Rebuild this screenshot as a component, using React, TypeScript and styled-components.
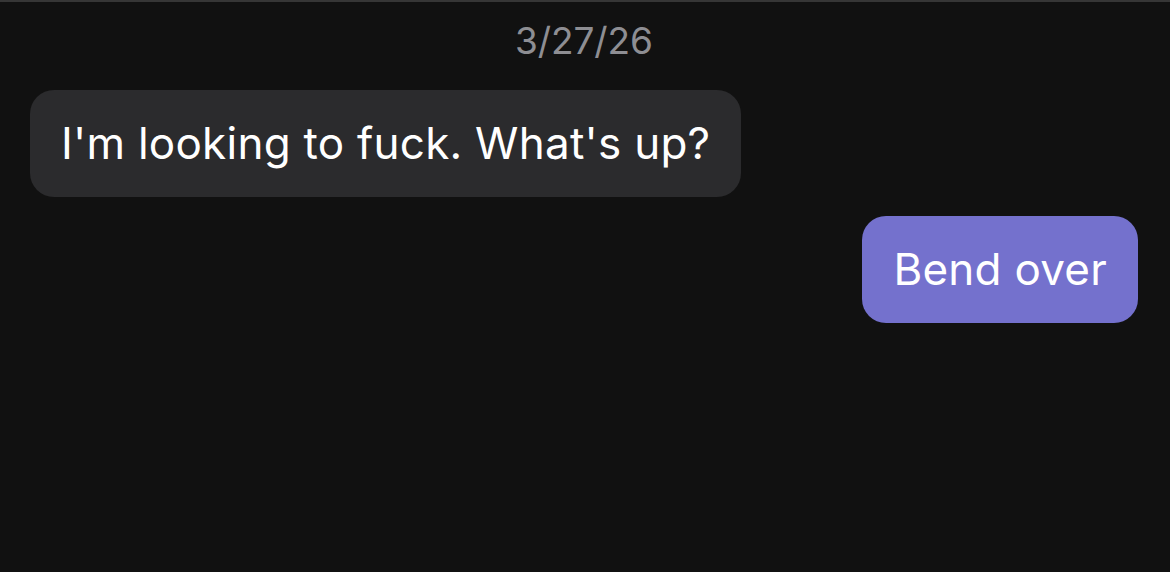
import React from "react";
import styled, { createGlobalStyle } from "styled-components";

const Global = createGlobalStyle`
  html, body { margin: 0; padding: 0; background: #111111; }
  body { font-family: Inter, "Noto Sans", sans-serif; }
`;

const Screen = styled.div`
  box-sizing: border-box;
  width: 1170px;
  height: 572px;
  background: #111111;
  border-top: 2px solid #363636;
  display: flex;
  flex-direction: column;
  padding: 17px 32px 0 30px;
  overflow: hidden;
`;

const DateLabel = styled.div`
  text-align: center;
  color: #8e8e93;
  font-size: 37px;
  line-height: 44px;
  letter-spacing: -0.1px;
  margin-bottom: 27px;
`;

const Row = styled.div<{ $mine?: boolean }>`
  display: flex;
  justify-content: ${(p) => (p.$mine ? "flex-end" : "flex-start")};
  margin-bottom: 19px;
`;

const Bubble = styled.div<{ $mine?: boolean }>`
  background: ${(p) => (p.$mine ? "#7471cd" : "#2b2b2d")};
  color: #ffffff;
  border-radius: 24px;
  padding: 26px 31px;
  font-size: 44px;
  line-height: 55px;
  letter-spacing: 0.25px;
  white-space: nowrap;
`;

export default function App() {
  return (
    <>
      <Global />
      <Screen>
        <DateLabel>3/27/26</DateLabel>
        <Row>
          <Bubble>I'm looking to fuck. What's up?</Bubble>
        </Row>
        <Row $mine>
          <Bubble $mine>Bend over</Bubble>
        </Row>
      </Screen>
    </>
  );
}
